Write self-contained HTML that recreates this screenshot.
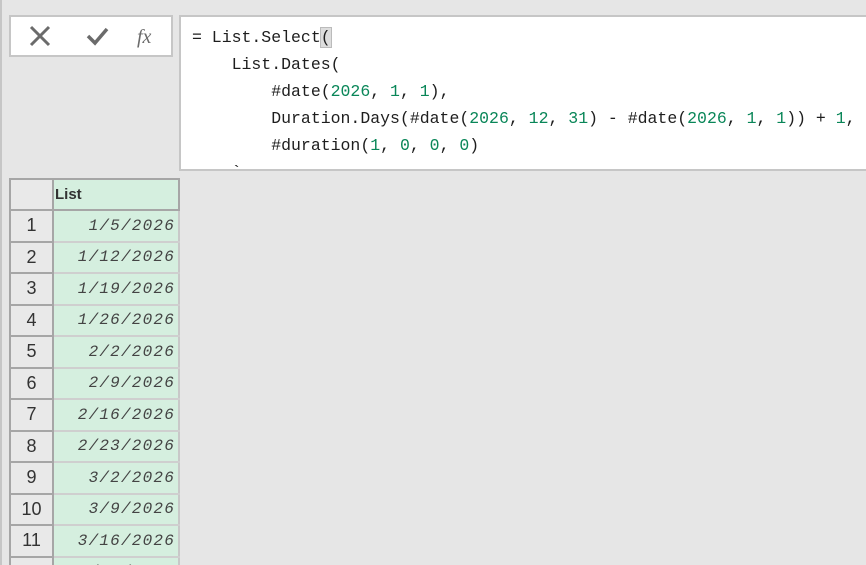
<!DOCTYPE html>
<html><head><style>
html,body{margin:0;width:866px;height:565px;overflow:hidden}
body{background:#e6e6e6;position:relative;font-family:"Liberation Sans",sans-serif}
.lb{position:absolute;left:0;top:0;width:2px;height:565px;background:#c6c6c6}
.btns{position:absolute;left:9px;top:15px;width:160px;height:38px;background:#fff;border:2px solid #c6c6c6}
.fx{position:absolute;left:179px;top:15px;width:700px;height:152px;background:#fff;border:2px solid #c6c6c6;border-right:none;overflow:hidden}
.code{position:absolute;left:11px;top:7px;font-family:"Liberation Mono",monospace;font-size:16.5px;line-height:27px;color:#1e1e1e;white-space:pre}
.n{color:#098658}
.cur{background:#ddd;outline:1px solid #bbb}
table{position:absolute;left:9px;top:178px;border-collapse:collapse}
td{height:29.5px;padding:0;border:2px solid #a6a6a6}
td.r{width:41px;background:#e9e9e9;text-align:center;font-size:18px;color:#333}
td.d{width:121px;background:#d5efdf;border-color:#a6a6a6 #c8c8c8 #cfcfcf #a6a6a6;text-align:right;font-family:"Liberation Mono",monospace;font-style:italic;font-size:16px;letter-spacing:1.2px;color:#444;padding-right:3px}
th{height:29px;padding:0;border:2px solid #a6a6a6;background:#d5efdf;text-align:left;font-size:15px;color:#333;padding-left:1px}
th.e{background:#e9e9e9}
</style></head><body>
<div class="lb"></div>
<div class="btns">
<svg width="160" height="38" style="position:absolute;left:0;top:0">
<path d="M20 10 L38 28 M38 10 L20 28" stroke="#6b6b6b" stroke-width="3"/>
<path d="M77 19 L84 26 L96 12" stroke="#6b6b6b" stroke-width="3.5" fill="none"/>
<text x="126" y="26" font-family="Liberation Serif" font-style="italic" font-size="20" fill="#6b6b6b">fx</text>
</svg></div>
<div class="fx"><div class="code">= List.Select<span class="cur">(</span>
    List.Dates(
        #date(<span class="n">2026</span>, <span class="n">1</span>, <span class="n">1</span>),
        Duration.Days(#date(<span class="n">2026</span>, <span class="n">12</span>, <span class="n">31</span>) - #date(<span class="n">2026</span>, <span class="n">1</span>, <span class="n">1</span>)) + <span class="n">1</span>,
        #duration(<span class="n">1</span>, <span class="n">0</span>, <span class="n">0</span>, <span class="n">0</span>)
    `</div></div>
<table>
<tr><th class="e"></th><th>List</th></tr>
<tr><td class="r">1</td><td class="d">1/5/2026</td></tr>
<tr><td class="r">2</td><td class="d">1/12/2026</td></tr>
<tr><td class="r">3</td><td class="d">1/19/2026</td></tr>
<tr><td class="r">4</td><td class="d">1/26/2026</td></tr>
<tr><td class="r">5</td><td class="d">2/2/2026</td></tr>
<tr><td class="r">6</td><td class="d">2/9/2026</td></tr>
<tr><td class="r">7</td><td class="d">2/16/2026</td></tr>
<tr><td class="r">8</td><td class="d">2/23/2026</td></tr>
<tr><td class="r">9</td><td class="d">3/2/2026</td></tr>
<tr><td class="r">10</td><td class="d">3/9/2026</td></tr>
<tr><td class="r">11</td><td class="d">3/16/2026</td></tr>
<tr><td class="r">12</td><td class="d">3/23/2026</td></tr>
</table>
</body></html>
